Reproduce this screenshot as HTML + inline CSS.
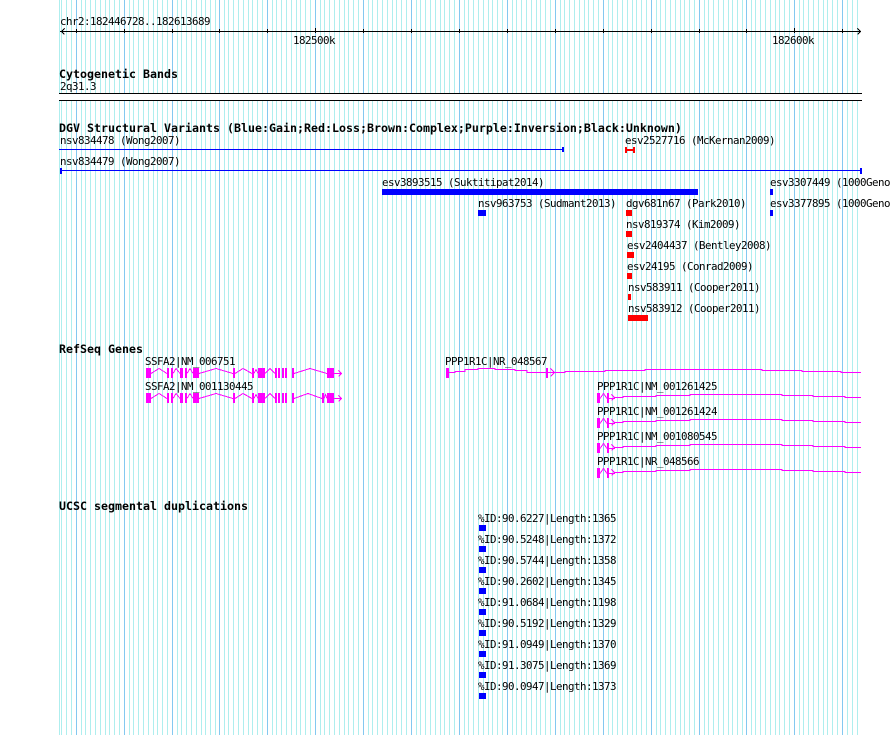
<!DOCTYPE html>
<html><head><meta charset="utf-8">
<style>
html,body{margin:0;padding:0;background:#fff;width:890px;height:735px;overflow:hidden}
svg{display:block}
text{font-family:"DejaVu Sans Mono","Liberation Mono",monospace;font-size:10.8px;letter-spacing:-.5px;fill:#000;white-space:pre}
text.b{font-weight:bold;font-size:11.63px;letter-spacing:0}
.m{fill:none;stroke:#f0f;stroke-width:1;shape-rendering:crispEdges}
</style></head><body>
<svg width="890" height="735" viewBox="0 0 890 735" xmlns="http://www.w3.org/2000/svg">
<defs>
<g id="u" shape-rendering="crispEdges" fill="none">
<path stroke="#aeeeee" d="M5.5 0V735M9.5 0V735M14.5 0V735M19.5 0V735M24.5 0V735M29.5 0V735M33.5 0V735M38.5 0V735M43.5 0V735"/>
<path stroke="#84c8f0" d="M.5 0V735"/>
</g>
</defs>
<path stroke="#aeeeee" fill="none" shape-rendering="crispEdges" d="M59.5 0V735M61.5 0V735M66.5 0V735M71.5 0V735M847.5 0V735M852.5 0V735M857.5 0V735"/>
<path stroke="#84c8f0" fill="none" shape-rendering="crispEdges" d="M842.5 0V735"/>
<use href="#u" x="76"/><use href="#u" x="124"/><use href="#u" x="172"/><use href="#u" x="219"/><use href="#u" x="267"/><use href="#u" x="315"/><use href="#u" x="363"/><use href="#u" x="411"/><use href="#u" x="459"/><use href="#u" x="507"/><use href="#u" x="555"/><use href="#u" x="603"/><use href="#u" x="651"/><use href="#u" x="699"/><use href="#u" x="746"/><use href="#u" x="794"/>

<!-- ruler -->
<g shape-rendering="crispEdges" fill="none" stroke="#000">
<path d="M60 31.5H861"/>
<path d="M76.5 29V33M124.5 29V33M172.5 29V33M219.5 29V33M267.5 29V33M363.5 29V33M411.5 29V33M459.5 29V33M507.5 29V33M555.5 29V33M603.5 29V33M651.5 29V33M699.5 29V33M746.5 29V33M842.5 29V33M315.5 28V33M794.5 28V33"/>
<path d="M64.5 28.5L61.5 31.5L64.5 34.5M857.5 28.5L860.5 31.5L857.5 34.5"/>
</g>
<text x="60" y="25">chr2:182446728..182613689</text>
<text x="293" y="44">182500k</text>
<text x="772" y="44">182600k</text>

<!-- cytoband -->
<text class="b" x="59" y="78">Cytogenetic Bands</text>
<text x="60" y="90">2q31.3</text>
<rect x="59" y="93" width="803" height="8" fill="#fff"/>
<rect x="59" y="93" width="803" height="1" fill="#000"/>
<rect x="59" y="100" width="803" height="1" fill="#000"/>

<!-- DGV -->
<text class="b" x="59" y="132">DGV Structural Variants (Blue:Gain;Red:Loss;Brown:Complex;Purple:Inversion;Black:Unknown)</text>
<text x="60" y="144">nsv834478 (Wong2007)</text>
<g fill="#00f" shape-rendering="crispEdges">
<rect x="59" y="149" width="505" height="1"/><rect x="562" y="147" width="2" height="5"/>
<rect x="60" y="170" width="802" height="1"/><rect x="60" y="168" width="2" height="6"/><rect x="860" y="168" width="2" height="6"/>
<rect x="382" y="189" width="316" height="6"/>
<rect x="770" y="189" width="3" height="6"/>
<rect x="770" y="210" width="3" height="6"/>
<rect x="478" y="210" width="8" height="6"/>
<rect x="479" y="525" width="7" height="6"/><rect x="479" y="546" width="7" height="6"/><rect x="479" y="567" width="7" height="6"/><rect x="479" y="588" width="7" height="6"/><rect x="479" y="609" width="7" height="6"/><rect x="479" y="630" width="7" height="6"/><rect x="479" y="651" width="7" height="6"/><rect x="479" y="672" width="7" height="6"/><rect x="479" y="693" width="7" height="6"/>
</g>
<g fill="#f00" shape-rendering="crispEdges">
<rect x="625" y="147" width="2" height="6"/><rect x="633" y="147" width="2" height="6"/><rect x="625" y="149" width="10" height="2"/>
<rect x="626" y="210" width="6" height="6"/>
<rect x="626" y="231" width="6" height="6"/>
<rect x="627" y="252" width="7" height="6"/>
<rect x="627" y="273" width="5" height="6"/>
<rect x="628" y="294" width="3" height="6"/>
<rect x="628" y="315" width="20" height="6"/>
</g>
<text x="60" y="165">nsv834479 (Wong2007)</text>
<text x="625" y="144">esv2527716 (McKernan2009)</text>
<text x="382" y="186">esv3893515 (Suktitipat2014)</text>
<text x="770" y="186">esv3307449 (1000Geno</text>
<text x="770" y="207">esv3377895 (1000Geno</text>
<text x="478" y="207">nsv963753 (Sudmant2013)</text>
<text x="626" y="207">dgv681n67 (Park2010)</text>
<text x="626" y="228">nsv819374 (Kim2009)</text>
<text x="627" y="249">esv2404437 (Bentley2008)</text>
<text x="627" y="270">esv24195 (Conrad2009)</text>
<text x="628" y="291">nsv583911 (Cooper2011)</text>
<text x="628" y="312">nsv583912 (Cooper2011)</text>

<!-- RefSeq -->
<text class="b" x="59" y="353">RefSeq Genes</text>
<text x="145" y="365">SSFA2|NM_006751</text>
<text x="145" y="390">SSFA2|NM_001130445</text>
<text x="445" y="365">PPP1R1C|NR_048567</text>
<text x="597" y="390">PPP1R1C|NM_001261425</text>
<text x="597" y="415">PPP1R1C|NM_001261424</text>
<text x="597" y="440">PPP1R1C|NM_001080545</text>
<text x="597" y="465">PPP1R1C|NR_048566</text>

<g id="g1">
<path class="m" d="M151 373.5L159 368.5L167 373.5M173 373.5L176 368.5L180 373.5M187 373.5L190 368.5L193 373.5M199 373.5L216 368.5L233 373.5M235 373.5L243 368.5L252 373.5M254 373.5L256 369.5L258 373.5M265 373.5L270 368.5L275 373.5M294 373.5L310 368.5L327 373.5M334 373.5H342M338.5 370.5L341.5 373.5L338.5 376.5"/>
<g fill="#f0f" shape-rendering="crispEdges">
<rect x="146" y="368" width="5" height="10"/><rect x="167" y="368" width="2" height="10"/><rect x="171" y="368" width="2" height="10"/><rect x="180" y="368" width="3" height="10"/><rect x="185" y="368" width="2" height="10"/><rect x="193" y="368" width="6" height="10"/><rect x="233" y="368" width="2" height="10"/><rect x="252" y="368" width="2" height="10"/><rect x="258" y="368" width="7" height="10"/><rect x="275" y="368" width="2" height="10"/><rect x="278" y="368" width="2" height="10"/><rect x="282" y="368" width="2" height="10"/><rect x="285" y="368" width="2" height="10"/><rect x="292" y="368" width="2" height="10"/><rect x="327" y="368" width="7" height="10"/>
</g>
</g>
<g transform="translate(0,25)">
<path class="m" d="M151 373.5L159 368.5L167 373.5M173 373.5L176 368.5L180 373.5M187 373.5L190 368.5L193 373.5M199 373.5L216 368.5L233 373.5M235 373.5L243 368.5L252 373.5M254 373.5L256 369.5L258 373.5M265 373.5L270 368.5L275 373.5M294 373.5L308 368.5L322 373.5M324 373.5L325.5 369.5L327 373.5M334 373.5H342M338.5 370.5L341.5 373.5L338.5 376.5"/>
<g fill="#f0f" shape-rendering="crispEdges">
<rect x="146" y="368" width="5" height="10"/><rect x="167" y="368" width="2" height="10"/><rect x="171" y="368" width="2" height="10"/><rect x="180" y="368" width="3" height="10"/><rect x="185" y="368" width="2" height="10"/><rect x="193" y="368" width="6" height="10"/><rect x="233" y="368" width="2" height="10"/><rect x="252" y="368" width="2" height="10"/><rect x="258" y="368" width="7" height="10"/><rect x="275" y="368" width="2" height="10"/><rect x="278" y="368" width="2" height="10"/><rect x="282" y="368" width="2" height="10"/><rect x="285" y="368" width="2" height="10"/><rect x="292" y="368" width="2" height="10"/><rect x="322" y="368" width="2" height="10"/><rect x="327" y="368" width="7" height="10"/>
</g>
</g>

<!-- NR_048567 -->
<path class="m" d="M449 372.5H455V371.5H465V369.5H478V368.5H495V369.5H515V370.5H527V372.5H546M548 372.5H555M550.5 368.5L554.5 372.5L550.5 376.5M555 372.5H565V371.5H605V370.5H645V369.5H762V370.5H802V371.5H841V372.5H861"/>
<g fill="#f0f" shape-rendering="crispEdges"><rect x="446" y="368" width="3" height="10"/><rect x="546" y="368" width="2" height="10"/></g>

<!-- PPP1R1C rows -->
<g id="p0">
<path class="m" d="M600 398.5L603.5 393.5L607 398.5M609 398.5H615M611.5 394.5L614.5 397.5L611.5 400.5M615 397.5H623V396.5H656V395.5H690V394.5H782V395.5H813V396.5H845V397.5H861"/>
<g fill="#f0f" shape-rendering="crispEdges"><rect x="597" y="393" width="3" height="10"/><rect x="607" y="393" width="2" height="10"/></g>
</g>
<g transform="translate(0,25)">
<path class="m" d="M600 398.5L603.5 393.5L607 398.5M609 398.5H615M611.5 394.5L614.5 397.5L611.5 400.5M615 397.5H623V396.5H656V395.5H690V394.5H782V395.5H813V396.5H845V397.5H861"/>
<g fill="#f0f" shape-rendering="crispEdges"><rect x="597" y="393" width="3" height="10"/><rect x="607" y="393" width="2" height="10"/></g>
</g>
<g transform="translate(0,50)">
<path class="m" d="M600 398.5L603.5 393.5L607 398.5M609 398.5H615M611.5 394.5L614.5 397.5L611.5 400.5M615 397.5H623V396.5H656V395.5H690V394.5H782V395.5H813V396.5H845V397.5H861"/>
<g fill="#f0f" shape-rendering="crispEdges"><rect x="597" y="393" width="3" height="10"/><rect x="607" y="393" width="2" height="10"/></g>
</g>
<g transform="translate(0,75)">
<path class="m" d="M600 398.5L603.5 393.5L607 398.5M609 398.5H615M611.5 394.5L614.5 397.5L611.5 400.5M615 397.5H623V396.5H656V395.5H690V394.5H782V395.5H813V396.5H845V397.5H861"/>
<g fill="#f0f" shape-rendering="crispEdges"><rect x="597" y="393" width="3" height="10"/><rect x="607" y="393" width="2" height="10"/></g>
</g>

<!-- UCSC -->
<text class="b" x="59" y="510">UCSC segmental duplications</text>
<text x="478" y="522">%ID:90.6227|Length:1365</text>
<text x="478" y="543">%ID:90.5248|Length:1372</text>
<text x="478" y="564">%ID:90.5744|Length:1358</text>
<text x="478" y="585">%ID:90.2602|Length:1345</text>
<text x="478" y="606">%ID:91.0684|Length:1198</text>
<text x="478" y="627">%ID:90.5192|Length:1329</text>
<text x="478" y="648">%ID:91.0949|Length:1370</text>
<text x="478" y="669">%ID:91.3075|Length:1369</text>
<text x="478" y="690">%ID:90.0947|Length:1373</text>
</svg>
</body></html>
